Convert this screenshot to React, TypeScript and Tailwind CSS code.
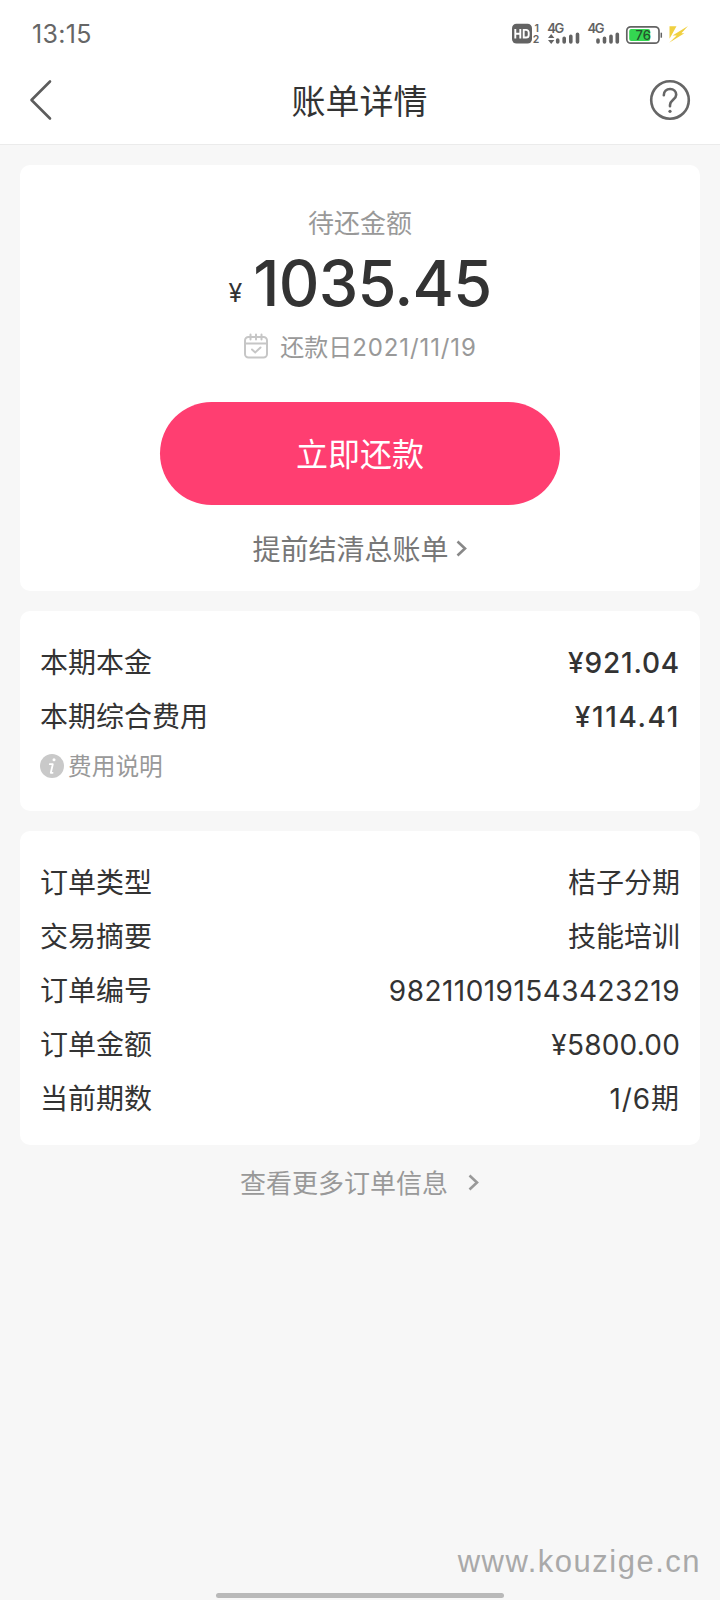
import type { ReactNode } from 'react';

type Row = { label: string; value: string; spacing?: string };

const feeRows: Row[] = [
  { label: '本期本金', value: '¥921.04', spacing: 'tracking-[0.8px]' },
  { label: '本期综合费用', value: '¥114.41', spacing: 'tracking-[1.6px]' },
];

const orderRows: Row[] = [
  { label: '订单类型', value: '桔子分期' },
  { label: '交易摘要', value: '技能培训' },
  { label: '订单编号', value: '982110191543423219', spacing: 'tracking-[0.45px]' },
  { label: '订单金额', value: '¥5800.00', spacing: 'tracking-[0.2px]' },
  { label: '当前期数', value: '1/6期', spacing: 'tracking-[0.9px]' },
];

function Chevron({ className }: { className: string }) {
  return (
    <svg width="12" height="18" viewBox="0 0 12 18" fill="none" stroke="currentColor" strokeWidth="2.6" className={className}>
      <path d="M1.5 1.5l7.5 7-7.5 7" />
    </svg>
  );
}

function StatusIcons() {
  return (
    <svg width="182" height="30" viewBox="0 0 182 30" fontFamily="Inter, sans-serif">
      {/* HD badge */}
      <rect x="1" y="4.8" width="20" height="19.8" rx="4.5" fill="#636363" />
      <path d="M4.3 10v9.4M9.3 10v9.4M4.3 14.7h5M12.7 10.9h2.4a2.6 2.6 0 0 1 2.6 2.6v2.4a2.6 2.6 0 0 1-2.6 2.6h-2.4z" fill="none" stroke="#fff" strokeWidth="1.9" />
      <text x="23.5" y="13" fontSize="10.5" fontWeight="600" fill="#636363">1</text>
      <text x="21.8" y="24.4" fontSize="10.5" fontWeight="600" fill="#636363">2</text>
      {/* SIM 1 */}
      <text x="36.3" y="14.2" fontSize="13" fontWeight="600" fill="#636363" textLength="17">4G</text>
      <path d="M37 19l3.2-4 3.2 4zM37 21l3.2 4 3.2-4z" fill="#636363" />
      <g stroke="#636363" strokeWidth="3.6" strokeLinecap="round">
        <path d="M46.7 21v2M53.2 19.3v3.7M59.8 17.3V23M66.5 15.3V23" />
      </g>
      {/* SIM 2 */}
      <text x="76.5" y="14.2" fontSize="13" fontWeight="600" fill="#636363" textLength="17">4G</text>
      <g stroke="#636363" strokeWidth="3.6" strokeLinecap="round">
        <path d="M87 21v2M93.5 19.3v3.7M100 17.3V23M106.3 15.3V23" />
      </g>
      {/* battery */}
      <rect x="115.8" y="7.8" width="32.2" height="16.4" rx="4" fill="#fff" stroke="#636363" strokeWidth="1.7" />
      <rect x="118.2" y="10" width="21" height="12" rx="2" fill="#34d651" />
      <path d="M150.3 13.7v5" stroke="#636363" strokeWidth="1.5" />
      <text x="124.5" y="20.8" fontSize="13" fontWeight="500" fill="#24502b">76</text>
      {/* fast charge mark */}
      <path d="M158.5 7.3h7l-7 12.4zM177 7l-15.5 9.4h4.2l-7.5 7.4 15.2-9.6h-3z" fill="#f0d040" />
    </svg>
  );
}

function Card({ className, children }: { className: string; children: ReactNode }) {
  return <section className={`mx-5 rounded-[10px] bg-white ${className}`}>{children}</section>;
}

function InfoRow({ label, value, spacing = '', bold }: Row & { bold?: boolean }) {
  return (
    <div className="flex h-[54px] items-center justify-between text-[28px] leading-[54px] text-[#333]">
      <span>{label}</span>
      <span className={`${spacing} ${bold ? 'font-medium' : ''}`}>{value}</span>
    </div>
  );
}

export default function App() {
  return (
    <div className="flex h-[1600px] w-[720px] flex-col overflow-hidden bg-[#f7f7f7] font-['Inter','Noto_Sans_CJK_SC',sans-serif]">
      <header className="h-[145px] border-b border-[#ebebeb] bg-white">
        <div className="flex h-[68px] items-center justify-between pr-[27px] pl-8">
          <span className="pt-px text-[25px] leading-none tracking-[0.3px] text-[#666]">13:15</span>
          <StatusIcons />
        </div>
        <div className="flex h-16 items-center justify-between pr-[29px] pl-7">
          <svg width="42" height="42" viewBox="0 0 42 42" fill="none" stroke="#5c5c5c" strokeWidth="2.6" strokeLinecap="round" strokeLinejoin="round">
            <path d="M22 2.5L3.5 21 22 39.5" />
          </svg>
          <h1 className="pt-1 text-[34px] leading-none text-[#333]">账单详情</h1>
          <svg width="42" height="42" viewBox="0 0 42 42" fill="none" stroke="#666" strokeWidth="2.6" strokeLinecap="round">
            <circle cx="21" cy="21" r="18.8" />
            <path d="M14.8 16.2c0-3.8 2.7-6.2 6.3-6.2s6.1 2.4 6.1 5.8c0 4.8-6.2 5.3-6.2 10.2v1.3" />
            <circle cx="21" cy="32.3" r="1.6" fill="#666" stroke="none" />
          </svg>
        </div>
      </header>

      <Card className="mt-5 flex h-[426px] flex-col items-center">
        <p className="mt-[42px] h-[34px] text-[26px] leading-[34px] text-[#999]">待还金额</p>
        <div className="mt-2 flex h-[68px] items-end text-[#333]">
          <span className="mr-[11px] mb-[11px] text-[25px] leading-none">¥</span>
          <span className="text-[63px] leading-[68px] font-medium tracking-[-0.7px]">1035.45</span>
        </div>
        <div className="mt-[14px] flex h-[34px] items-center text-[24px] leading-[34px] text-[#999]">
          <svg width="26" height="26" viewBox="0 0 26 26" fill="none" stroke="#c6c6c6" strokeWidth="2" strokeLinecap="round" className="mr-[11px] mb-1">
            <rect x="2" y="4" width="22" height="20.5" rx="3.5" />
            <path d="M2 10.5h22M7.5 1.5v5M13 1.5v5M18.5 1.5v5M9 16.5l3.2 3 5.3-5" />
          </svg>
          还款日<span className="tracking-[0.9px]">2021/11/19</span>
        </div>
        <button className="mt-[37px] h-[103px] w-[400px] rounded-full bg-[#ff3e71] pt-[3px] text-[32px] text-white">立即还款</button>
        <div className="mt-[27px] flex h-9 items-center text-[28px] leading-9 text-[#777]">
          提前结清总账单
          <Chevron className="mb-[3px] ml-[7px] text-[#888]" />
        </div>
      </Card>

      <Card className="mt-5 h-[200px] px-5 pt-[25px]">
        {feeRows.map((row) => (
          <InfoRow key={row.label} {...row} bold />
        ))}
        <div className="mt-[5px] flex h-9 items-center text-[23.7px] leading-9 text-[#999]">
          <svg width="24" height="24" viewBox="0 0 24 24" className="mr-1 mb-0.5">
            <circle cx="12" cy="12" r="12" fill="#c9c9c9" />
            <circle cx="14" cy="5.8" r="1.5" fill="#fff" />
            <path d="M9.8 10.2h3l-2 8.6h1.8" fill="none" stroke="#fff" strokeWidth="1.8" strokeLinecap="round" strokeLinejoin="round" />
          </svg>
          费用说明
        </div>
      </Card>

      <Card className="mt-5 h-[314px] px-5 pt-[25px]">
        {orderRows.map((row) => (
          <InfoRow key={row.label} {...row} />
        ))}
      </Card>

      <div className="mt-[21px] flex h-9 items-center justify-center text-[26px] leading-9 text-[#999]">
        查看更多订单信息
        <Chevron className="mb-0.5 ml-5" />
      </div>

      <footer className="mt-auto flex flex-col">
        <p className="mr-[19px] self-end font-['Liberation_Sans',sans-serif] text-[31px] leading-[34px] tracking-[1.5px] text-[#a9a9a9]">www.kouzige.cn</p>
        <div className="mt-[14px] mb-[2px] h-[5px] w-72 self-center rounded-full bg-[#b9b9b9]" />
      </footer>
    </div>
  );
}
